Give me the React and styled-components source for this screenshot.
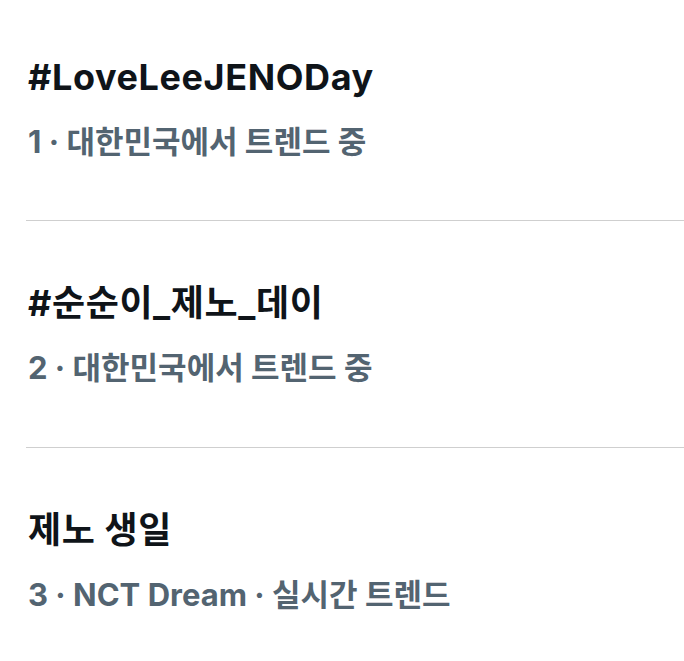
import React from "react";
import styled, { createGlobalStyle } from "styled-components";

const GlobalStyle = createGlobalStyle`
  html, body {
    margin: 0;
    padding: 0;
    background: #ffffff;
  }
  body {
    font-family: Inter, "Noto Sans CJK KR", sans-serif;
  }
`;

const TrendList = styled.div`
  width: 684px;
  height: 661px;
  overflow: hidden;
  background: #ffffff;
`;

const TrendItem = styled.div`
  margin-left: 26px;
  padding: 62px 0 59px 2px;
  border-bottom: 1px solid #cfcfcf;
  &:first-child {
    padding-top: 57px;
    padding-bottom: 58px;
  }
  &:last-child {
    border-bottom: none;
  }
`;

const TrendTitle = styled.div`
  font-size: 36px;
  line-height: 40px;
  font-weight: 700;
  color: #0f1419;
  letter-spacing: 0.6px;
`;

const TrendMeta = styled.div`
  margin-top: 25px;
  font-size: 31px;
  line-height: 40px;
  font-weight: 700;
  color: #536471;
`;

const trends = [
  { title: "#LoveLeeJENODay", meta: "1 · 대한민국에서 트렌드 중" },
  { title: "#순순이_제노_데이", meta: "2 · 대한민국에서 트렌드 중" },
  { title: "제노 생일", meta: "3 · NCT Dream · 실시간 트렌드" },
];

const App = () => {
  return (
    <>
      <GlobalStyle />
      <TrendList>
        {trends.map((item) => (
          <TrendItem key={item.title}>
            <TrendTitle>{item.title}</TrendTitle>
            <TrendMeta>{item.meta}</TrendMeta>
          </TrendItem>
        ))}
      </TrendList>
    </>
  );
};

export default App;
